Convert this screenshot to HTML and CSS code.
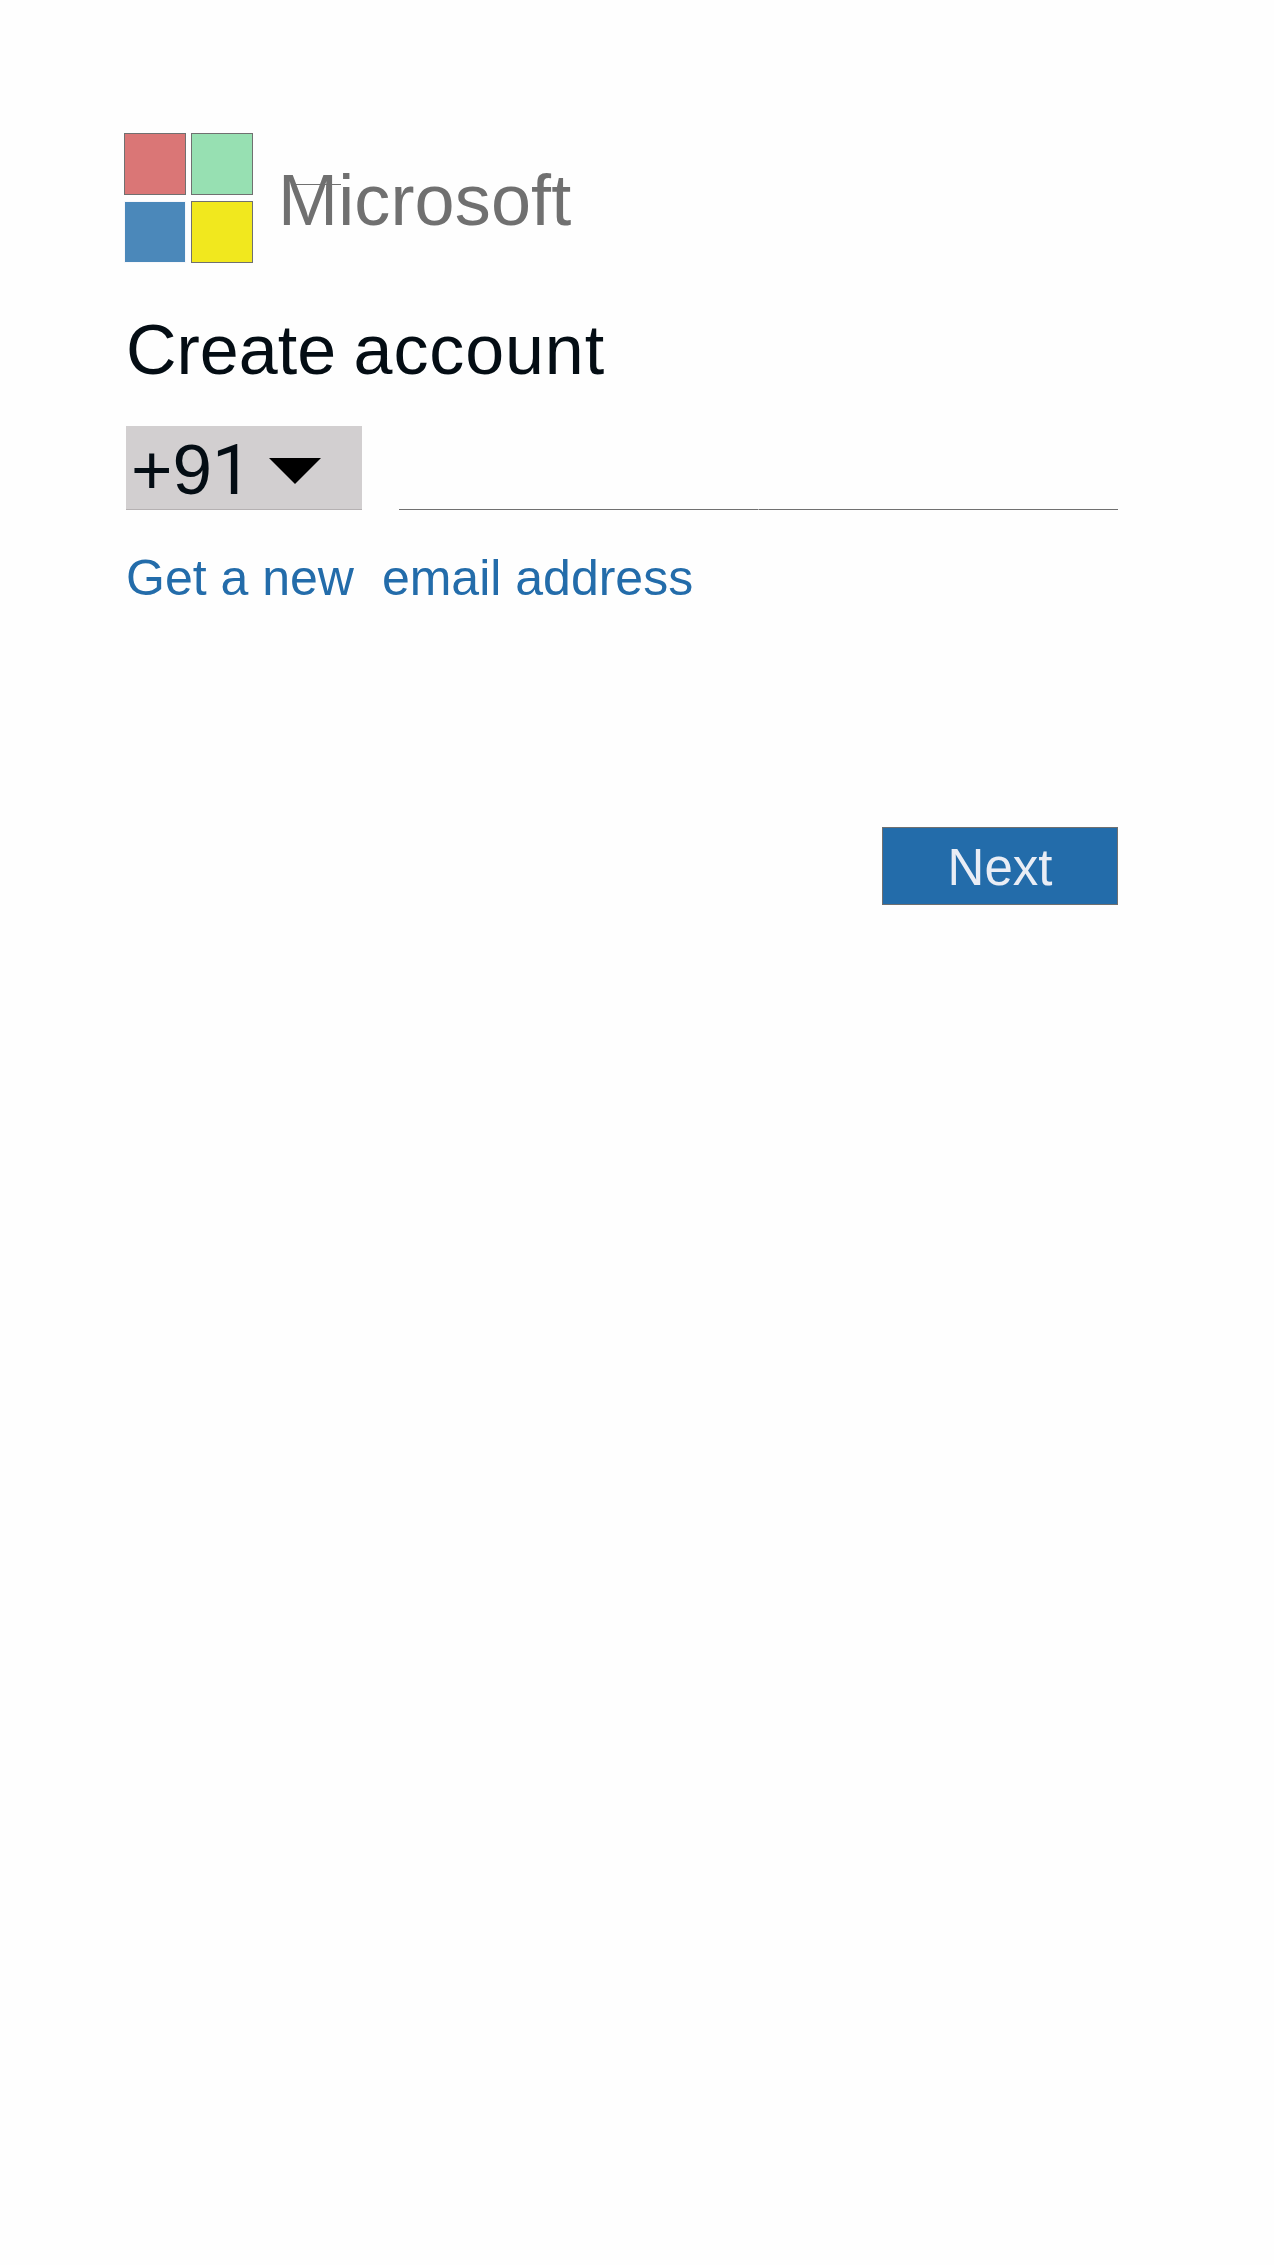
FILE: index.html
```html
<!DOCTYPE html>
<html lang="en">
<head>
<meta charset="utf-8">
<title>Create account</title>
<link rel="stylesheet" href="styles.css">
</head>
<body>
<main class="page">
  <header class="brand">
    <div class="tiles">
      <span class="tile red"></span>
      <span class="tile green"></span>
      <span class="tile blue"></span>
      <span class="tile yellow"></span>
    </div>
    <div class="wordmark">Microsoft</div>
  </header>
  <h1 class="title">Create <span class="wide">account</span></h1>
  <div class="phone">
    <div class="code">
      <span class="digits">+9<span class="one">1</span></span>
      <svg class="arrow" width="52" height="26" viewBox="0 0 52 26"><path d="M0 0H52L26 26Z"/></svg>
    </div>
    <div class="number"><span class="rule"></span><span class="rule"></span></div>
  </div>
  <a class="link"><span>Get a new</span><span class="email">email address</span></a>
  <button class="next">Next</button>
</main>
</body>
</html>
```
FILE: styles.css
```css
body {
  margin: 0;
  background: #fefefe;
  font-family: "Liberation Sans", Arial, sans-serif;
}
.page {
  box-sizing: border-box;
  width: 1274px;
  height: 2265px;
  padding: 133px 155px 0 124px;
  display: flex;
  flex-direction: column;
}
.brand {
  display: flex;
  height: 130px;
}
.tiles {
  display: grid;
  grid-template-columns: 62px 62px;
  grid-template-rows: 62px 62px;
  gap: 6px 5px;
}
.tile { border: 1px solid #707070; }
.red { background: #da7676; }
.green { background: #97e0b2; }
.blue { background: #4b88ba; border-color: #f7f7fa; }
.yellow { background: #f1e81e; }
.wordmark {
  position: relative;
  margin-left: 25px;
  font-size: 72px;
  letter-spacing: 0.15px;
  line-height: 134px;
  color: #707070;
}
.wordmark::after {
  content: "";
  position: absolute;
  left: 17px;
  top: 51px;
  width: 46px;
  height: 1px;
  background: #707070;
}
.title {
  margin: 47px 0 0 2px;
  font-size: 70px;
  font-weight: 400;
  line-height: 80px;
  word-spacing: -2px;
  color: #040d14;
}
.wide { letter-spacing: 0.9px; }
.phone {
  display: flex;
  gap: 37px;
  height: 84px;
  margin: 36px 0 0 2px;
}
.code {
  box-sizing: border-box;
  width: 236px;
  padding-left: 5px;
  display: flex;
  background: #d2cfd0;
  border-bottom: 1px solid #b5b1b2;
}
.digits {
  width: 138px;
  font-size: 71px;
  line-height: 87px;
  color: #040d14;
}
.one { font-family: Roboto, sans-serif; }
.arrow { margin-top: 32px; }
.number {
  flex: 1;
  display: flex;
  align-items: flex-end;
  margin-right: 1px;
}
.rule {
  flex: 1;
  height: 1px;
  background: #707070;
}
.rule + .rule { border-left: 1px solid #b7b7b7; }
.link {
  display: flex;
  margin: 38px 0 0 2px;
  font-size: 50px;
  line-height: 60px;
  color: #236caa;
}
.email { margin-left: 28px; }
.next {
  align-self: flex-end;
  box-sizing: border-box;
  width: 236px;
  height: 78px;
  margin: 219px 1px 0 0;
  padding: 3px 0 0;
  border: 1px solid #707070;
  background: #236caa;
  font: 51px/73px "Liberation Sans", Arial, sans-serif;
  color: #e9edf5;
}
```
